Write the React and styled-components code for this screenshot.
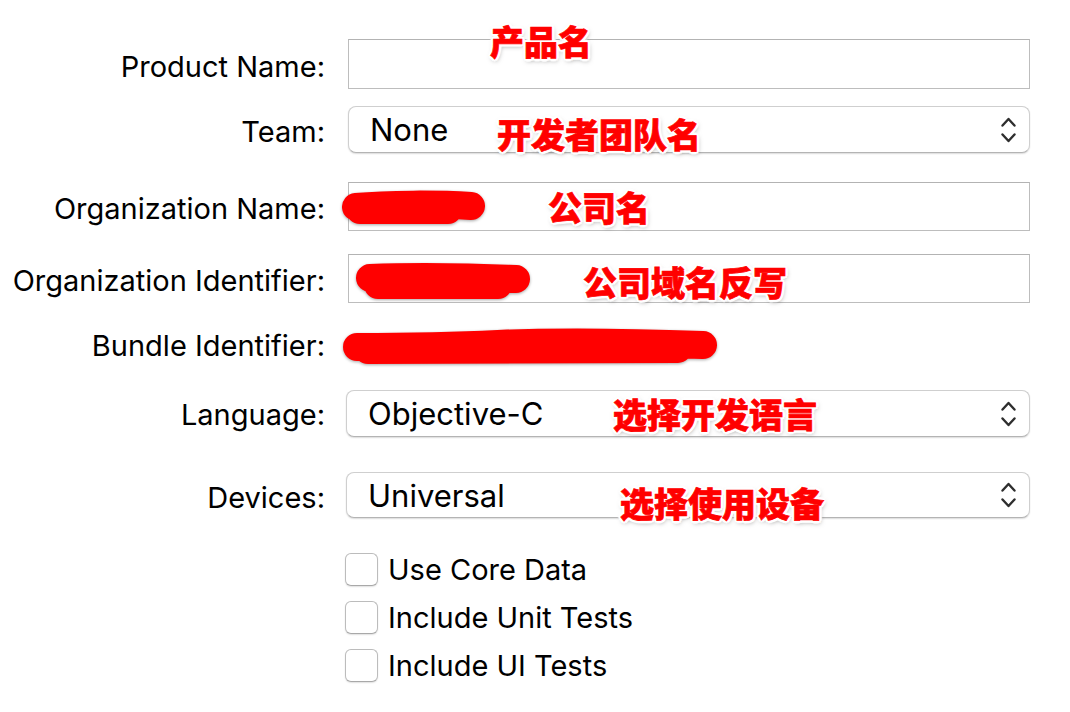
import styled, { createGlobalStyle } from 'styled-components';

const GlobalStyle = createGlobalStyle`
  html, body {
    margin: 0;
    padding: 0;
    background: #ffffff;
  }
  body {
    font-family: Inter, "Liberation Sans", "Noto Sans CJK SC", sans-serif;
    color: #000;
  }
`;

const Page = styled.div`
  width: 1070px;
  height: 712px;
  padding-top: 39px;
  box-sizing: border-box;
  overflow: hidden;
`;

const Form = styled.div`
  display: flex;
  flex-direction: column;
`;

const Row = styled.div`
  display: grid;
  grid-template-columns: 325px 682px;
  column-gap: 23px;
  align-items: center;
  margin-top: ${(p) => p.$mt || 0}px;
  height: ${(p) => p.$h}px;
`;

const Label = styled.div`
  text-align: right;
  font-size: 29px;
  white-space: nowrap;
  transform: translateY(${(p) => p.$dy || 0}px);
`;

const Slot = styled.div`
  position: relative;
  height: 100%;
  margin-left: ${(p) => p.$ml || 0}px;
`;

const TextField = styled.div`
  height: 100%;
  box-sizing: border-box;
  border: 1.5px solid #bdbdbd;
  border-top-color: #b3b3b3;
  background: #fff;
`;

const Popup = styled.div`
  height: 100%;
  box-sizing: border-box;
  display: flex;
  align-items: center;
  justify-content: space-between;
  padding: 0 13px 0 21px;
  border: 1px solid #cfcfcf;
  border-bottom-color: #b4b4b4;
  border-radius: 8px;
  background: #fff;
  box-shadow: 0 1px 1.5px rgba(0, 0, 0, 0.14);
  font-size: 31px;
`;

const Value = styled.div`
  height: 100%;
`;

const Note = styled.span`
  position: absolute;
  left: ${(p) => p.$x}px;
  top: ${(p) => p.$y}px;
  font-family: "Noto Sans CJK SC", sans-serif;
  font-weight: 900;
  font-size: 34px;
  line-height: 1;
  color: #ff0000;
  -webkit-text-stroke: 0.7px #ff0000;
  white-space: nowrap;
  text-shadow:
    2px 0 0 #fff, -2px 0 0 #fff, 0 2px 0 #fff, 0 -2px 0 #fff,
    2px 2px 0 #fff, -2px -2px 0 #fff, 2px -2px 0 #fff, -2px 2px 0 #fff,
    3px 0 1px #fff, -3px 0 1px #fff, 0 3px 1px #fff, 0 -3px 1px #fff,
    1px 2px 5px rgba(0, 0, 0, 0.5);
  pointer-events: none;
`;

const Scribble = styled.svg`
  position: absolute;
  left: 0;
  top: 0;
  overflow: visible;
  filter: drop-shadow(0 1px 1.5px rgba(0, 0, 0, 0.35));
  pointer-events: none;
`;

const Checks = styled.div`
  display: flex;
  flex-direction: column;
  gap: 15px;
  margin-top: 35px;
  padding-left: 345px;
`;

const CheckRow = styled.label`
  display: flex;
  align-items: center;
  gap: 10px;
  height: 33px;
  font-size: 29px;
`;

const Box = styled.span`
  width: 33px;
  height: 33px;
  box-sizing: border-box;
  border: 1px solid #bcbcbc;
  border-bottom-color: #a9a9a9;
  border-radius: 6px;
  background: #fff;
  box-shadow: 0 1px 1.5px rgba(0, 0, 0, 0.12);
  flex-shrink: 0;
`;

const Chevrons = () => (
  <svg width="15" height="30" viewBox="0 0 15 30">
    <path
      d="M1.5 10.5 L7.5 4 L13.5 10.5 M1.5 19.5 L7.5 26 L13.5 19.5"
      fill="none"
      stroke="#2e2e2e"
      strokeWidth="2.4"
      strokeLinecap="round"
      strokeLinejoin="round"
    />
  </svg>
);

const Red = ({ d, w }) => (
  <Scribble width="10" height="10">
    <path d={d} fill="none" stroke="#ff0000" strokeWidth={w} strokeLinecap="round" strokeLinejoin="round" />
  </Scribble>
);

const App = () => {
  return (
    <Page>
      <GlobalStyle />
      <Form>
        <Row $h={50}>
          <Label $dy={2}>Product Name:</Label>
          <Slot>
            <TextField />
            <Note $x={142} $y={-15}>产品名</Note>
          </Slot>
        </Row>

        <Row $mt={17} $h={47}>
          <Label $dy={2}>Team:</Label>
          <Slot>
            <Popup>
              <span>None</span>
              <Chevrons />
            </Popup>
            <Note $x={149} $y={11}>开发者团队名</Note>
          </Slot>
        </Row>

        <Row $mt={29} $h={49}>
          <Label $dy={2}>Organization Name:</Label>
          <Slot>
            <TextField />
            <Red d="M8 25 C40 22, 90 22, 123 24 M12 28 L100 28" w={28} />
            <Note $x={200} $y={8}>公司名</Note>
          </Slot>
        </Row>

        <Row $mt={23} $h={49}>
          <Label $dy={2}>Organization Identifier:</Label>
          <Slot>
            <TextField />
            <Red d="M22 24 C70 22, 120 23, 168 25 M30 31 L150 31" w={28} />
            <Note $x={235} $y={11}>公司域名反写</Note>
          </Slot>
        </Row>

        <Row $mt={22} $h={40}>
          <Label>Bundle Identifier:</Label>
          <Slot>
            <Value />
            <Red d="M9 22 C60 22, 110 21, 150 19 C220 16, 300 18, 355 20 M20 25 L330 24" w={28} />
          </Slot>
        </Row>

        <Row $mt={25} $h={47}>
          <Label $dy={1}>Language:</Label>
          <Slot $ml={-2}>
            <Popup>
              <span>Objective-C</span>
              <Chevrons />
            </Popup>
            <Note $x={267} $y={7}>选择开发语言</Note>
          </Slot>
        </Row>

        <Row $mt={35} $h={46}>
          <Label $dy={2}>Devices:</Label>
          <Slot $ml={-2}>
            <Popup>
              <span>Universal</span>
              <Chevrons />
            </Popup>
            <Note $x={274} $y={14}>选择使用设备</Note>
          </Slot>
        </Row>
      </Form>

      <Checks>
        <CheckRow>
          <Box />
          Use Core Data
        </CheckRow>
        <CheckRow>
          <Box />
          Include Unit Tests
        </CheckRow>
        <CheckRow>
          <Box />
          Include UI Tests
        </CheckRow>
      </Checks>
    </Page>
  );
};

export default App;
